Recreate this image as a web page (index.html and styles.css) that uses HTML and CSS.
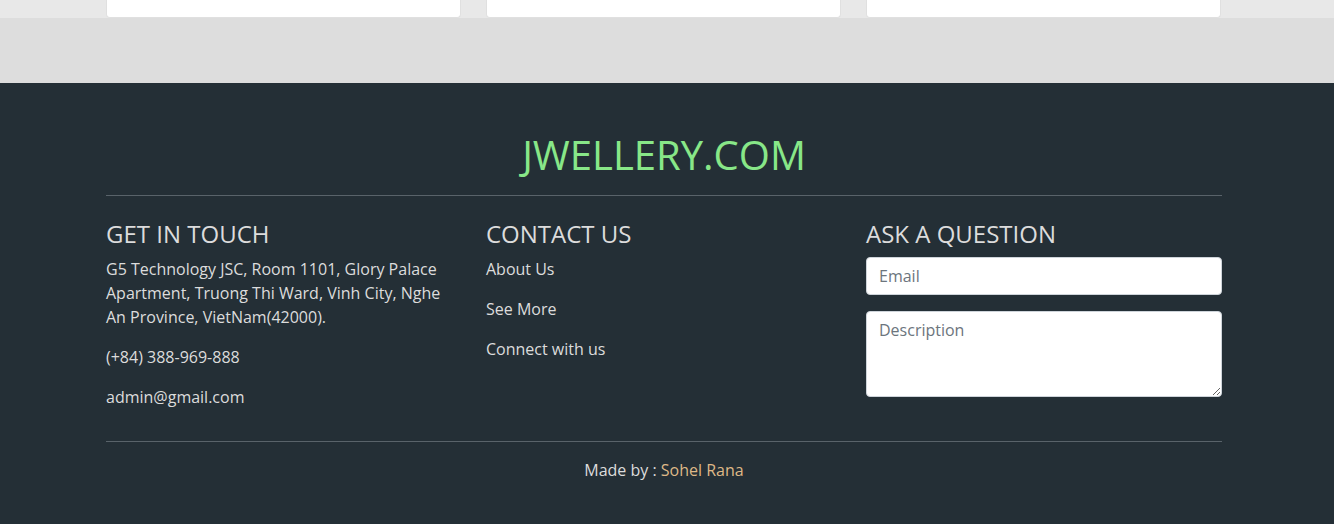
FILE: index.html
```html
<!DOCTYPE html>
<html lang="en">
<head>
<meta charset="utf-8">
<title>Jwellery Footer</title>
<link rel="stylesheet" href="styles.css">
</head>
<body>
<section class="products">
  <div class="wrap cards">
    <div class="card"></div>
    <div class="card"></div>
    <div class="card"></div>
  </div>
</section>
<section class="spacer"></section>
<footer class="footer">
  <div class="wrap">
    <h1 class="brand">JWELLERY.COM</h1>
    <hr class="rule">
    <div class="cols">
      <div class="col">
        <h2 class="col-title">GET IN TOUCH</h2>
        <p class="text">G5 Technology JSC, Room 1101, Glory Palace Apartment, Truong Thi Ward, Vinh City, Nghe An Province, VietNam(42000).</p>
        <p class="text">(+84) 388-969-888</p>
        <p class="text">admin@gmail.com</p>
      </div>
      <div class="col">
        <h2 class="col-title">CONTACT US</h2>
        <p class="text"><a class="link" href="#">About Us</a></p>
        <p class="text"><a class="link" href="#">See More</a></p>
        <p class="text"><a class="link" href="#">Connect with us</a></p>
      </div>
      <div class="col">
        <h2 class="col-title">ASK A QUESTION</h2>
        <input class="field" type="email" placeholder="Email">
        <textarea class="field area" placeholder="Description"></textarea>
      </div>
    </div>
    <hr class="rule rule-bottom">
    <p class="credit">Made by : <span class="author">Sohel Rana</span></p>
  </div>
</footer>
</body>
</html>
```

FILE: styles.css
```css
* { box-sizing: border-box; }
html, body { margin: 0; padding: 0; }
body {
  font-family: "Open Sans", "Noto Sans", sans-serif;
  font-size: 16px;
  line-height: 24px;
  background: #242f36;
  overflow: hidden;
}
.wrap {
  width: 1116px;
  margin-left: 106px;
}
.products {
  background: #e8e8e8;
  height: 18px;
  overflow: hidden;
}
.cards {
  display: grid;
  grid-template-columns: 355px 355px 355px;
  gap: 25px;
  height: 18px;
}
.card {
  background: #fff;
  border: 1px solid #e0e0e0;
  border-top: 0;
  border-radius: 0 0 4px 4px;
}
.spacer {
  background: #dddddd;
  height: 65px;
}
.footer {
  background: #242f36;
  padding-top: 48px;
  height: 441px;
}
.brand {
  margin: 0;
  font-size: 40px;
  line-height: 48px;
  font-weight: 400;
  text-align: center;
  color: #88e788;
}
.rule {
  border: 0;
  border-top: 1px solid #59636a;
  margin: 16px 0 23px;
  height: 0;
}
.cols {
  display: grid;
  grid-template-columns: 355px 355px 356px;
  gap: 25px;
}
.col-title {
  margin: 0 0 9px;
  font-size: 24px;
  line-height: 29px;
  font-weight: 400;
  color: #dcdcdc;
}
.text {
  margin: 0 0 16px;
  color: #dcdcdc;
  font-size: 16px;
  line-height: 24px;
}
.link {
  color: #dcdcdc;
  text-decoration: none;
}
.field {
  display: block;
  width: 100%;
  height: 38px;
  padding: 6px 12px;
  font-family: "Open Sans", "Noto Sans", sans-serif;
  font-size: 16px;
  line-height: 24px;
  color: #495057;
  background: #fff;
  border: 1px solid #ced4da;
  border-radius: 4px;
  margin: 0 0 16px;
}
.field::placeholder { color: #6c757d; }
.area {
  height: 86px;
  resize: vertical;
}
.rule-bottom {
  margin: 16px 0 16px;
}
.credit {
  margin: 0;
  text-align: center;
  color: #dcdcdc;
  font-size: 16px;
  line-height: 24px;
}
.author { color: #deb887; }
```
